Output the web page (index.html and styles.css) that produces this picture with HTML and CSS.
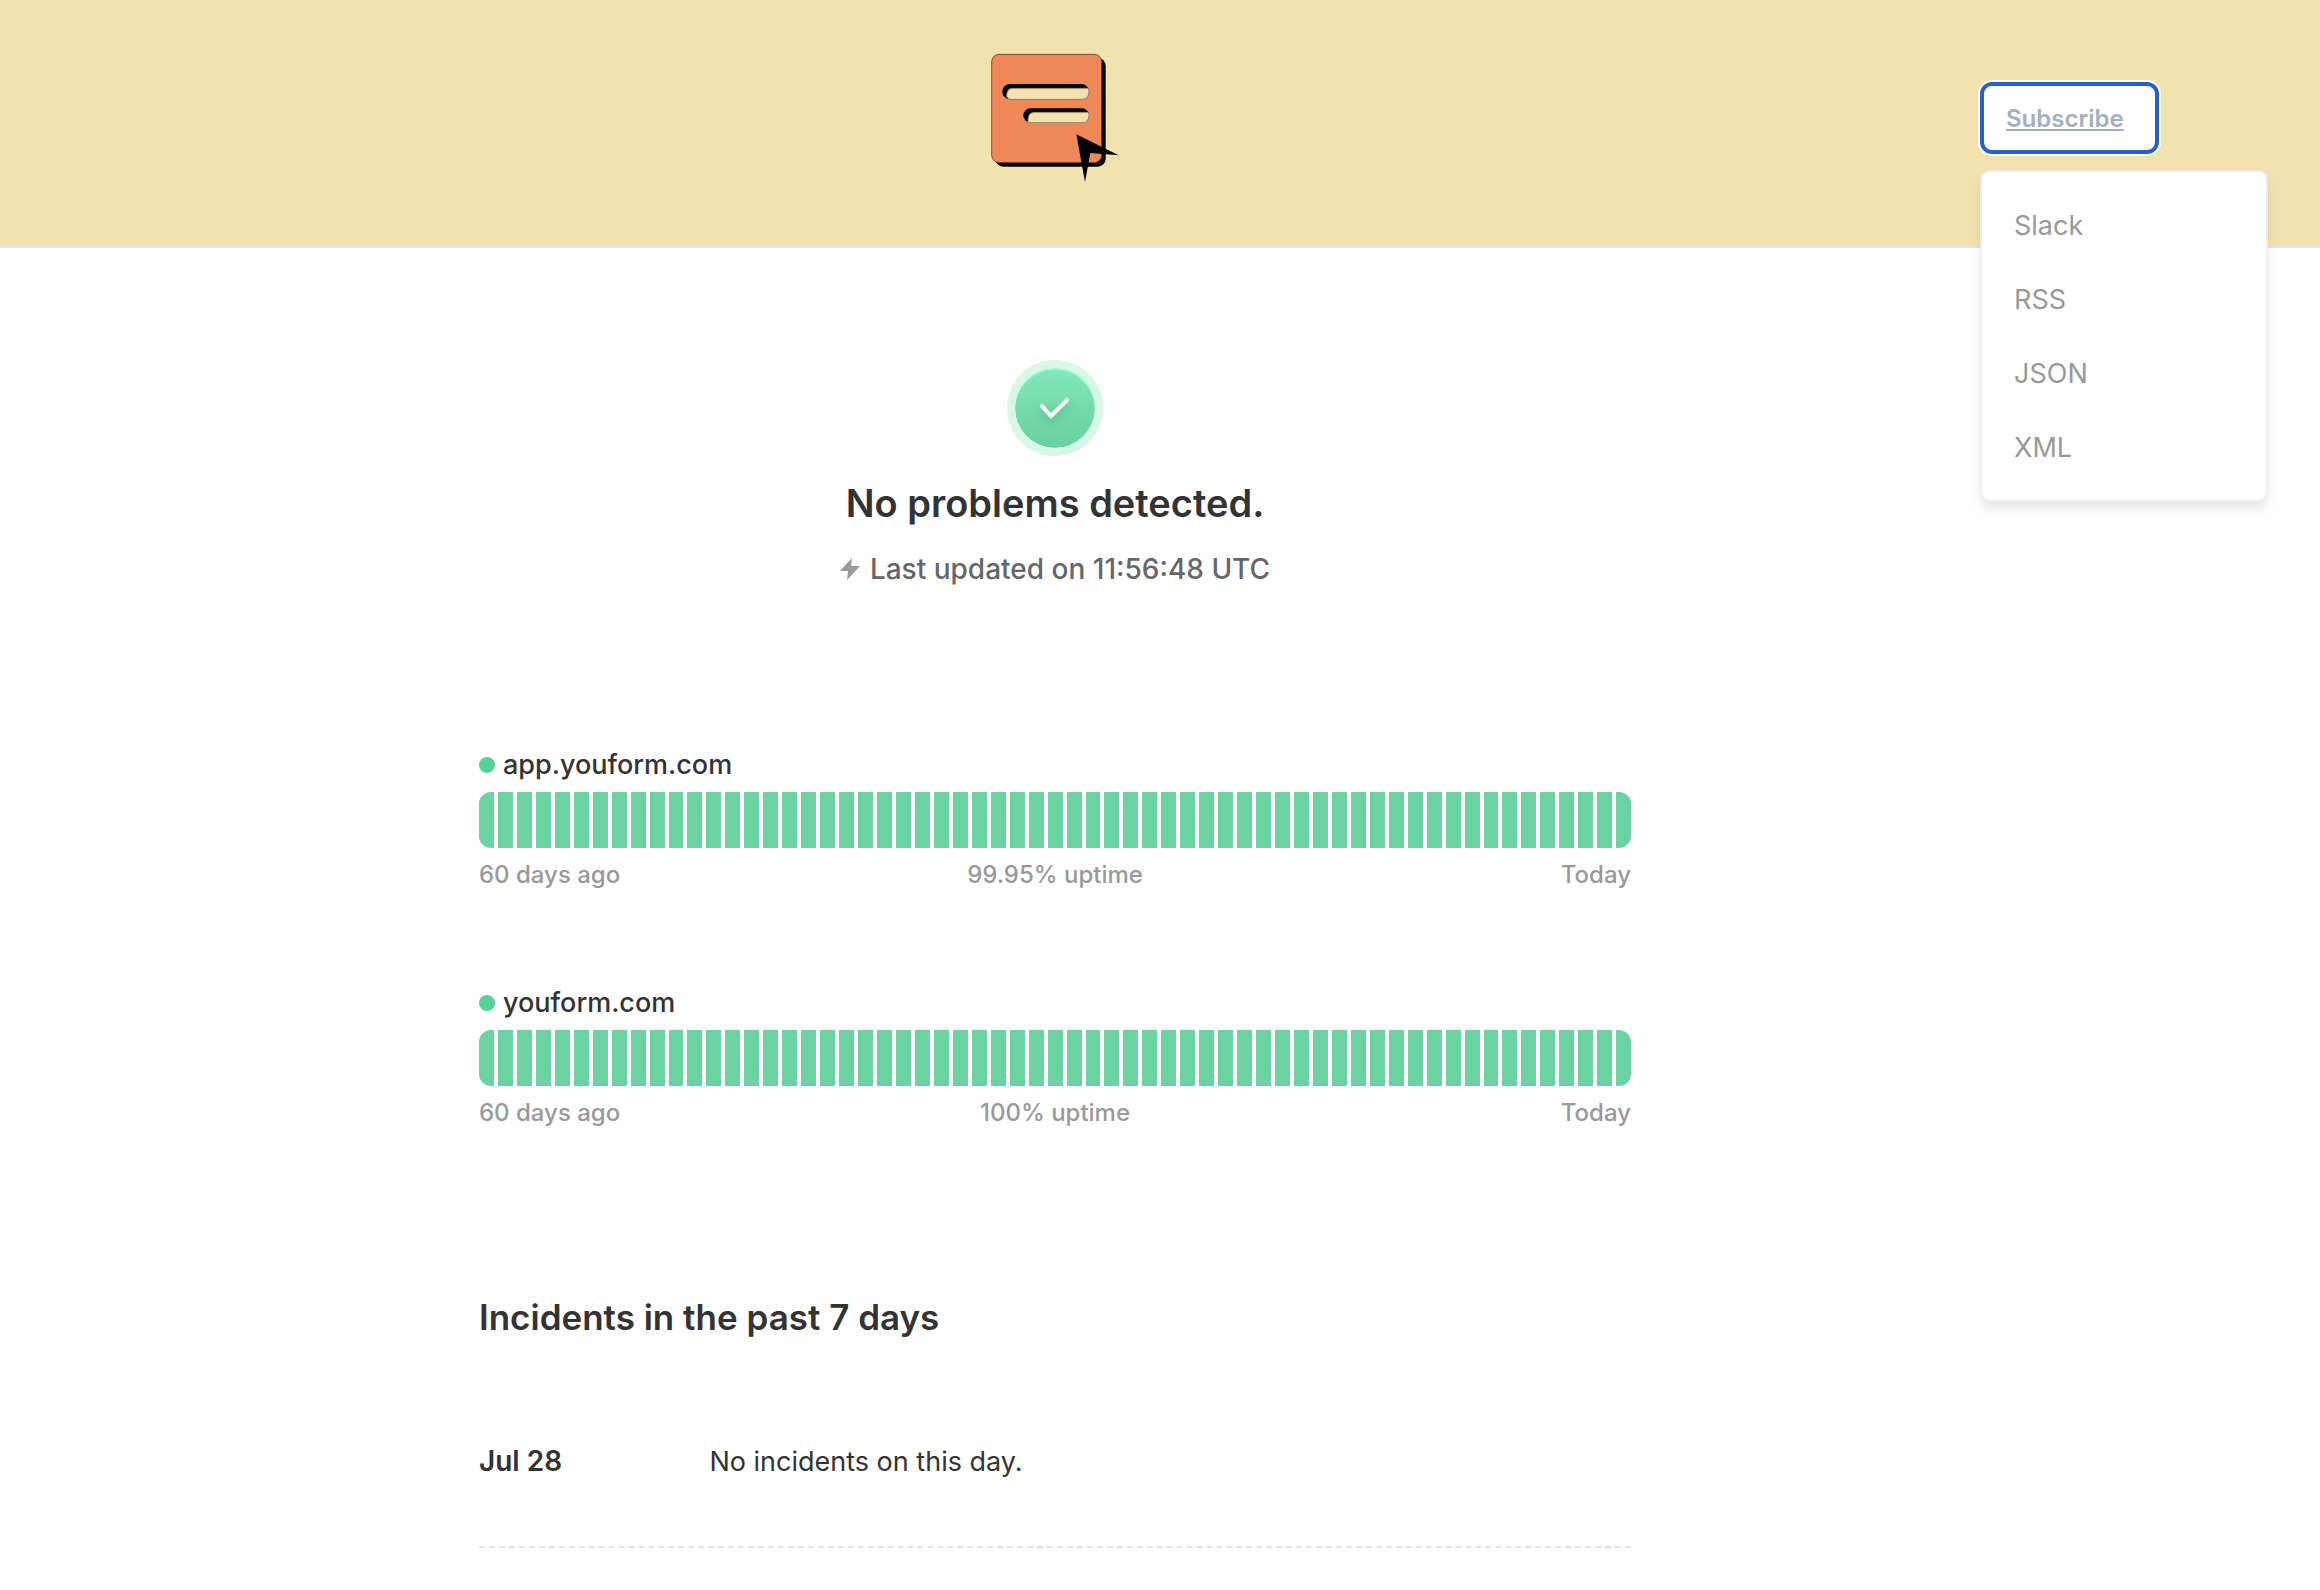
FILE: index.html
```html
<!DOCTYPE html>
<html lang="en">
<head>
  <meta charset="UTF-8" />
  <meta name="viewport" content="width=device-width, initial-scale=1.0"/>
  <title>Youform Status</title>
  <link rel="stylesheet" href="styles.css">
</head>
<body>
  <header class="header">
    <a href="#" class="logo" aria-label="Youform">
      <svg viewBox="60 69 390 390" width="130" height="130">
        <rect x="76" y="84" width="331" height="326" rx="24" fill="#000"/>
        <rect x="65" y="73" width="330" height="325" rx="22" fill="#ef8759" stroke="#3a2416" stroke-width="2"/>
        <rect x="97" y="162" width="260" height="46" rx="23" fill="#000"/>
        <path d="M126 175H354Q357 179 357 186Q355 208 336 208H120Q110 207 110 196Q111 176 126 175Z" fill="#f2e2af" stroke="#8d7a54" stroke-width="2"/>
        <rect x="160" y="235" width="197" height="43" rx="21" fill="#000"/>
        <path d="M190 247H354Q357 251 357 257Q355 278 336 278H174Q172 249 190 247Z" fill="#f2e2af" stroke="#8d7a54" stroke-width="2"/>
        <path d="M319 313L446 376L361 369L345 456Z" fill="#000"/>
      </svg>
    </a>
    <div class="subscribe">
      <button type="button" class="subscribe-button" id="subscribeButton" aria-expanded="true" aria-controls="subscribeMenu">Subscribe</button>
      <nav class="subscribe-menu" id="subscribeMenu">
        <a href="#">Slack</a>
        <a href="#">RSS</a>
        <a href="#">JSON</a>
        <a href="#">XML</a>
      </nav>
    </div>
  </header>

  <main class="main">
    <section class="status">
      <div class="status-icon">
        <svg viewBox="0 0 32 24" width="32" height="24">
          <path d="M3 10L12 20L28 4" fill="none" stroke="#fff" stroke-width="4" stroke-linecap="round"/>
        </svg>
      </div>
      <h1>No problems detected.</h1>
      <p class="updated">
        <svg viewBox="0 0 20 22" width="20" height="22">
          <path d="M12 0L0 13H8L7 22L20 8H11Z" fill="#999"/>
        </svg>
        <span>Last updated on 11:56:48 UTC</span>
      </p>
    </section>

    <section class="monitors">
      <div class="monitor">
        <h2 class="monitor-name"><span class="dot"></span>app.youform.com</h2>
        <div class="bars"></div>
        <div class="legend">
          <span>60 days ago</span>
          <span>99.95% uptime</span>
          <span>Today</span>
        </div>
      </div>
      <div class="monitor">
        <h2 class="monitor-name"><span class="dot"></span>youform.com</h2>
        <div class="bars"></div>
        <div class="legend">
          <span>60 days ago</span>
          <span>100% uptime</span>
          <span>Today</span>
        </div>
      </div>
    </section>

    <section class="incidents">
      <h2>Incidents in the past 7 days</h2>
      <div class="incident">
        <h3>Jul 28</h3>
        <p>No incidents on this day.</p>
      </div>
    </section>
  </main>

  <script>
    const DAYS = 61;

    // one bar per day, today included
    document.querySelectorAll('.bars').forEach((bars) => {
      for (let i = 0; i < DAYS; i++) {
        const bar = document.createElement('span');
        bar.className = 'bar';
        bars.appendChild(bar);
      }
    });

    const button = document.getElementById('subscribeButton');
    const menu = document.getElementById('subscribeMenu');

    button.addEventListener('click', () => {
      menu.hidden = !menu.hidden;
      button.setAttribute('aria-expanded', String(!menu.hidden));
    });
  </script>
</body>
</html>
```

FILE: styles.css
```css
* {
  margin: 0;
  padding: 0;
  box-sizing: border-box;
}

body {
  font-family: Inter, "Liberation Sans", sans-serif;
  font-size: 27px;
  line-height: 42px;
  color: #333;
  background: #fff;
}

a {
  color: inherit;
  text-decoration: none;
}

.header {
  display: flex;
  align-items: center;
  padding: 53px 161px 63px 130px;
  background: #f2e2af;
  border-bottom: 2px solid #e2e4ea;
}

.logo {
  flex: 1;
  display: flex;
  justify-content: center;
}

.logo svg {
  display: block;
}

.subscribe {
  position: relative;
}

.subscribe-button {
  display: block;
  width: 179px;
  height: 72px;
  padding: 2px 22px 0;
  border: 4px solid #2660cc;
  border-radius: 12px;
  background: #fff;
  box-shadow: 0 0 0 2px #fff;
  font: inherit;
  font-size: 24px;
  font-weight: 600;
  text-align: left;
  text-decoration: underline;
  color: #a3afc2;
  cursor: pointer;
}

.subscribe-menu {
  position: absolute;
  top: 88px;
  left: 0;
  width: 288px;
  padding: 17px 0 15px;
  background: #fff;
  border: 2px solid #eee;
  border-radius: 10px;
  box-shadow: 0 8px 12px -2px rgba(0, 0, 0, 0.12);
}

.subscribe-menu[hidden] {
  display: none;
}

.subscribe-menu a {
  display: block;
  padding: 16px 32px;
  color: #999;
}

.main {
  padding: 112px 210px 0 0;
}

.status {
  display: flex;
  flex-direction: column;
  align-items: center;
}

.status-icon {
  display: flex;
  align-items: center;
  justify-content: center;
  width: 96px;
  height: 96px;
  border: 8px solid #d8f8e6;
  border-radius: 50%;
  background: linear-gradient(#82e8bb, #68cf9f) padding-box;
  box-shadow: inset 0 2px 0 #8bffc9;
}

.status-icon svg {
  filter: drop-shadow(0 4px 4px rgba(0, 80, 40, 0.25));
}

.status h1 {
  margin-top: 20px;
  font-size: 38px;
  line-height: 54px;
  font-weight: 600;
}

.updated {
  display: flex;
  align-items: center;
  gap: 10px;
  margin-top: 18px;
  font-size: 28px;
  font-weight: 500;
  color: #666;
}

.monitors,
.incidents {
  max-width: 1152px;
  margin: 0 auto;
}

.monitors {
  display: flex;
  flex-direction: column;
  gap: 88px;
  padding-top: 154px;
}

.monitor-name {
  display: flex;
  align-items: center;
  gap: 8px;
  font-size: 27px;
  font-weight: 500;
}

.dot {
  width: 16px;
  height: 16px;
  border-radius: 50%;
  background: #56d297;
}

.bars {
  display: flex;
  gap: 4px;
  height: 56px;
  margin-top: 6px;
  border-radius: 12px;
  overflow: hidden;
}

.bar {
  flex: 1;
  background: #6bd2a2;
}

.legend {
  display: grid;
  grid-template-columns: 1fr auto 1fr;
  margin-top: 8px;
  font-size: 24px;
  line-height: 38px;
  font-weight: 500;
  color: #999;
}

.legend span:last-child {
  text-align: right;
}

.incidents {
  padding-top: 158px;
}

.incidents h2 {
  font-size: 35px;
  line-height: 54px;
  font-weight: 600;
}

.incident {
  display: grid;
  grid-template-columns: 1fr 4fr;
  align-items: baseline;
  margin-top: 96px;
  padding-bottom: 63px;
  border-bottom: 2px dashed #e4e4e4;
}

.incident h3 {
  font-size: 28px;
  font-weight: 600;
}
```
